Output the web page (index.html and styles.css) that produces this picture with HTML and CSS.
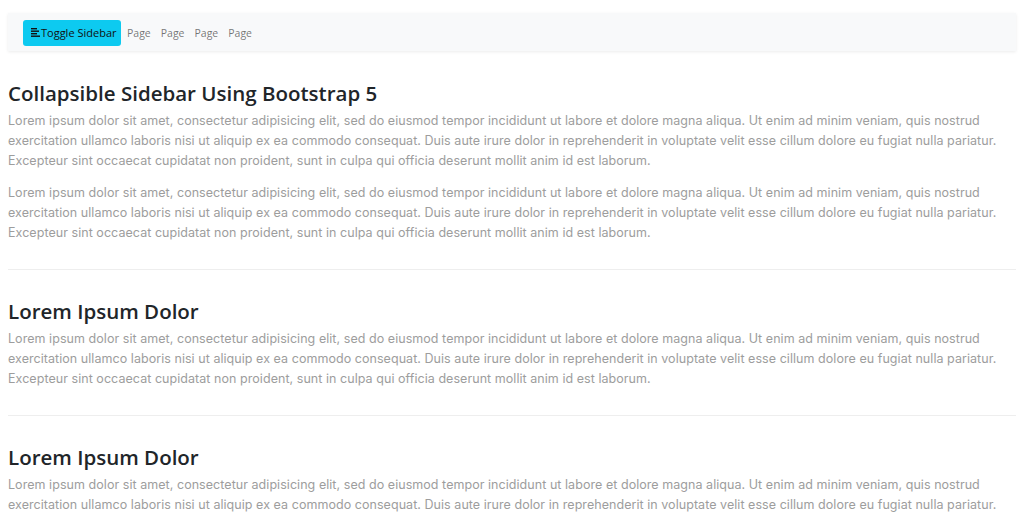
FILE: index.html
```html
<!DOCTYPE html>
<html lang="en">
<head>
<meta charset="utf-8">
<title>Collapsible Sidebar Using Bootstrap 5</title>
<link rel="stylesheet" href="styles.css">
</head>
<body>
<div class="page">
  <nav class="navbar">
    <button class="btn-toggle" type="button">
      <svg class="icon" width="9" height="9" viewBox="0 0 9 9" aria-hidden="true">
        <rect x="0" y="0" width="6" height="1.4" fill="#111"/>
        <rect x="0" y="2.5" width="8" height="1.4" fill="#111"/>
        <rect x="0" y="5" width="6" height="1.4" fill="#111"/>
        <rect x="0" y="7.5" width="9" height="1.4" fill="#111"/>
      </svg>Toggle Sidebar
    </button>
    <ul class="nav-links">
      <li><a href="#">Page</a></li>
      <li><a href="#">Page</a></li>
      <li><a href="#">Page</a></li>
      <li><a href="#">Page</a></li>
    </ul>
  </nav>

  <main class="content">
    <section class="section">
      <h2 class="title">Collapsible Sidebar Using Bootstrap 5</h2>
      <p class="text">Lorem ipsum dolor sit amet, consectetur adipisicing elit, sed do eiusmod tempor incididunt ut labore et dolore magna aliqua. Ut enim ad minim veniam, quis nostrud exercitation ullamco laboris nisi ut aliquip ex ea commodo consequat. Duis aute irure dolor in reprehenderit in voluptate velit esse cillum dolore eu fugiat nulla pariatur. Excepteur sint occaecat cupidatat non proident, sunt in culpa qui officia deserunt mollit anim id est laborum.</p>
      <p class="text">Lorem ipsum dolor sit amet, consectetur adipisicing elit, sed do eiusmod tempor incididunt ut labore et dolore magna aliqua. Ut enim ad minim veniam, quis nostrud exercitation ullamco laboris nisi ut aliquip ex ea commodo consequat. Duis aute irure dolor in reprehenderit in voluptate velit esse cillum dolore eu fugiat nulla pariatur. Excepteur sint occaecat cupidatat non proident, sunt in culpa qui officia deserunt mollit anim id est laborum.</p>
    </section>
    <hr class="divider">
    <section class="section">
      <h2 class="title">Lorem Ipsum Dolor</h2>
      <p class="text">Lorem ipsum dolor sit amet, consectetur adipisicing elit, sed do eiusmod tempor incididunt ut labore et dolore magna aliqua. Ut enim ad minim veniam, quis nostrud exercitation ullamco laboris nisi ut aliquip ex ea commodo consequat. Duis aute irure dolor in reprehenderit in voluptate velit esse cillum dolore eu fugiat nulla pariatur. Excepteur sint occaecat cupidatat non proident, sunt in culpa qui officia deserunt mollit anim id est laborum.</p>
    </section>
    <hr class="divider">
    <section class="section">
      <h2 class="title">Lorem Ipsum Dolor</h2>
      <p class="text">Lorem ipsum dolor sit amet, consectetur adipisicing elit, sed do eiusmod tempor incididunt ut labore et dolore magna aliqua. Ut enim ad minim veniam, quis nostrud exercitation ullamco laboris nisi ut aliquip ex ea commodo consequat. Duis aute irure dolor in reprehenderit in voluptate velit esse cillum dolore eu fugiat nulla pariatur. Excepteur sint occaecat cupidatat non proident, sunt in culpa qui officia deserunt mollit anim id est laborum.</p>
    </section>
  </main>
</div>
</body>
</html>
```

FILE: styles.css
```css
* { box-sizing: border-box; }
html, body { margin: 0; padding: 0; background: #fff; }
body { font-family: "Open Sans", "Noto Sans", sans-serif; color: #212529; }

.page { padding: 13px 8px 0 8px; }

.navbar {
  display: flex;
  align-items: center;
  height: 38px;
  padding: 1px 15px 0 15px;
  background: #f8f9fa;
  box-shadow: 0 1px 3px rgba(0,0,0,0.08);
}

.btn-toggle {
  display: flex;
  align-items: center;
  gap: 1px;
  height: 26px;
  width: 98px;
  padding: 0 8px;
  border: none;
  border-radius: 3px;
  background: #0dcaf0;
  color: #111;
  font-family: "Open Sans", "Noto Sans", sans-serif;
  font-size: 11px;
  white-space: nowrap;
}
.icon { flex: none; }

.nav-links { display: flex; list-style: none; margin: 0; padding: 0 0 0 1px; }
.nav-links a {
  display: block;
  padding: 0 5px;
  font-size: 10.5px;
  color: rgba(0,0,0,0.55);
  text-decoration: none;
}

.content { padding-top: 28px; }

.title {
  margin: 0 0 4px 0;
  font-size: 20.5px;
  font-weight: 600;
  line-height: 28px;
  color: #212529;
}

.text {
  margin: 0 0 12px 0;
  font-family: "Inter", "Open Sans", sans-serif;
  font-size: 12.5px;
  letter-spacing: 0.05px;
  line-height: 20px;
  color: #9d9d9d;
}
.text:last-child { margin-bottom: 0; }

.divider {
  margin: 26px 0 27px 0;
  border: none;
  border-top: 1px solid #eee;
}
.divider + .section .title { margin-top: 0; }
```
